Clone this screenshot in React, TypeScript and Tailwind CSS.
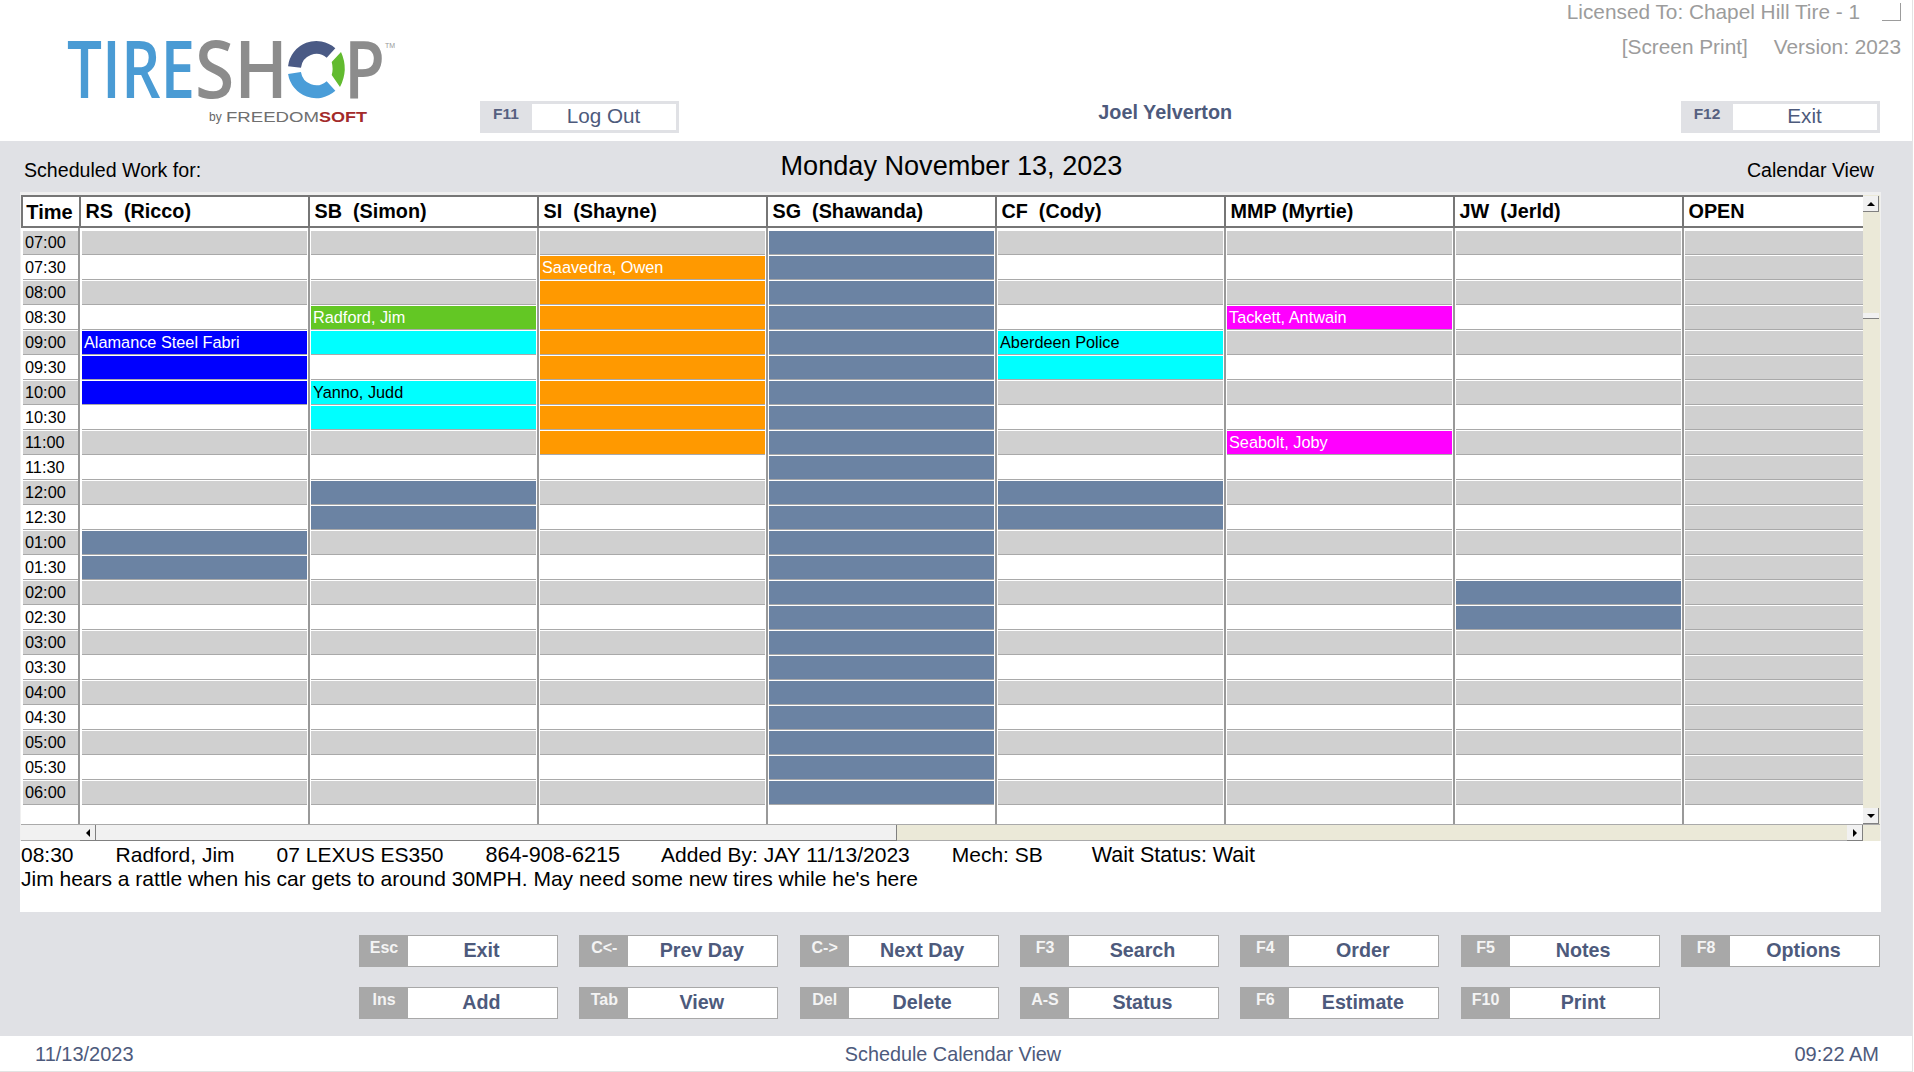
const times = [
  '07:00', '07:30', '08:00', '08:30', '09:00', '09:30', '10:00', '10:30', '11:00', '11:30', '12:00', '12:30',
  '01:00', '01:30', '02:00', '02:30', '03:00', '03:30', '04:00', '04:30', '05:00', '05:30', '06:00',
]

type Slot = { fill: string; label?: string }

const slate = { fill: 'bg-[#6b83a3]' }
const blue = 'bg-[#0000ff] text-white'
const cyan = 'bg-[#00ffff] text-black'
const orange = 'bg-[#ff9900] text-white'
const green = 'bg-[#63c724] text-white'
const pink = 'bg-[#ff00ff] text-white'

const sgSlots: Record<number, Slot> = {}
times.forEach((_, i) => {
  sgSlots[i] = slate
})

const columns: { name: string; slots: Record<number, Slot>; open?: boolean }[] = [
  {
    name: 'RS  (Ricco)',
    slots: {
      4: { fill: blue, label: 'Alamance Steel Fabri' },
      5: { fill: blue },
      6: { fill: blue },
      12: slate,
      13: slate,
    },
  },
  {
    name: 'SB  (Simon)',
    slots: {
      3: { fill: green, label: 'Radford, Jim' },
      4: { fill: cyan },
      6: { fill: cyan, label: 'Yanno, Judd' },
      7: { fill: cyan },
      10: slate,
      11: slate,
    },
  },
  {
    name: 'SI  (Shayne)',
    slots: {
      1: { fill: orange, label: 'Saavedra, Owen' },
      2: { fill: orange },
      3: { fill: orange },
      4: { fill: orange },
      5: { fill: orange },
      6: { fill: orange },
      7: { fill: orange },
      8: { fill: orange },
    },
  },
  { name: 'SG  (Shawanda)', slots: sgSlots },
  {
    name: 'CF  (Cody)',
    slots: {
      4: { fill: cyan, label: 'Aberdeen Police' },
      5: { fill: cyan },
      10: slate,
      11: slate,
    },
  },
  {
    name: 'MMP (Myrtie)',
    slots: {
      3: { fill: pink, label: 'Tackett, Antwain' },
      8: { fill: pink, label: 'Seabolt, Joby' },
    },
  },
  { name: 'JW  (Jerld)', slots: { 14: slate, 15: slate } },
  { name: 'OPEN', slots: {}, open: true },
]

const buttonRows = [
  [
    ['Esc', 'Exit'],
    ['C<-', 'Prev Day'],
    ['C->', 'Next Day'],
    ['F3', 'Search'],
    ['F4', 'Order'],
    ['F5', 'Notes'],
    ['F8', 'Options'],
  ],
  [
    ['Ins', 'Add'],
    ['Tab', 'View'],
    ['Del', 'Delete'],
    ['A-S', 'Status'],
    ['F6', 'Estimate'],
    ['F10', 'Print'],
  ],
]

function Logo() {
  return (
    <svg width="340" height="120" viewBox="0 -20 340 120" className="shrink-0">
      <g className="font-['Open_Sans',sans-serif]" fontSize="79" fontWeight="600">
        <text x="7" y="68" fill="#4a9bd4" textLength="128" lengthAdjust="spacingAndGlyphs">
          TIRE
        </text>
        <text x="135" y="68" fill="#8c8c8c" textLength="93" lengthAdjust="spacingAndGlyphs">
          SH
        </text>
        <text x="284" y="68" fill="#8c8c8c" textLength="41" lengthAdjust="spacingAndGlyphs">
          P
        </text>
      </g>
      <path d="M234.5 37 A22 22 0 0 1 271 23" fill="none" stroke="#4a5a85" strokeWidth="13" />
      <path d="M234.5 43 A22 22 0 0 0 271 56" fill="none" stroke="#4a9dd8" strokeWidth="13" />
      <path d="M281 22 Q289 39.5 280 57 L271.7 45 Q273.5 39 271.7 32 Z" fill="#62bb2f" />
      <text x="325" y="18" fontSize="7" fill="#999999" className="font-['Liberation_Sans',sans-serif]">
        TM
      </text>
      <g className="font-['Liberation_Sans',sans-serif]">
        <text x="149" y="91" fontSize="12" fill="#666666">
          by
        </text>
        <text x="166" y="92" fontSize="15.5" fill="#6f6f6f" textLength="93" lengthAdjust="spacingAndGlyphs">
          FREEDOM
        </text>
        <text x="259" y="92" fontSize="15.5" fontWeight="700" fill="#a32a2a" textLength="48" lengthAdjust="spacingAndGlyphs">
          SOFT
        </text>
      </g>
    </svg>
  )
}

function TopButton({ keyName, label }: { keyName: string; label: string }) {
  return (
    <div className="flex h-[32px] w-[199px] shrink-0 items-stretch bg-[#e0e1e5] py-[3px] pr-[3px]">
      <span className="flex w-[52px] items-start justify-center pt-[1px] text-[15.5px] leading-[18px] font-bold text-[#566080]">
        {keyName}
      </span>
      <span className="flex flex-1 items-center justify-center bg-white pr-[1px] pb-[2px] text-[20.7px] text-[#4d5a7c]">
        {label}
      </span>
    </div>
  )
}

function ActionButton({ keyName, label }: { keyName: string; label: string }) {
  return (
    <div className="flex h-[32px] w-[199px] shrink-0 border border-[#a8a8a8] bg-white">
      <span className="flex w-[48px] items-start justify-center bg-[#a8a8a8] pt-[2px] text-[16px] leading-[20px] font-bold text-[#f4f4f4]">
        {keyName}
      </span>
      <span className="flex flex-1 items-center justify-center pr-[2px] pb-[1px] text-[19.7px] font-bold text-[#4d5a7c]">
        {label}
      </span>
    </div>
  )
}

function Arrow({ dir }: { dir: 'up' | 'down' | 'left' | 'right' }) {
  const points = {
    up: '1,7 9,7 5,3',
    down: '1,3 9,3 5,7',
    left: '7,1 7,9 3,5',
    right: '3,1 3,9 7,5',
  }[dir]
  return (
    <svg width="10" height="10" viewBox="0 0 10 10">
      <polygon points={points} fill="#000000" />
    </svg>
  )
}

function ScrollButton({ dir }: { dir: 'up' | 'down' | 'left' | 'right' }) {
  return (
    <div className="flex h-[16px] w-[16px] shrink-0 items-center justify-center border-r border-b border-[#808080] bg-[#f1f1f1]">
      <Arrow dir={dir} />
    </div>
  )
}

export default function App() {
  return (
    <div className="h-[1072px] w-[1914px] overflow-hidden bg-white font-['Liberation_Sans',Arial,sans-serif]">
      <div className="flex h-[1072px] w-[1913px] flex-col border-r border-[#e3e3e3]">
        {/* header */}
        <div className="flex h-[141px] shrink-0">
          <div className="mt-[10px] ml-[60px]">
            <Logo />
          </div>
          <div className="mt-[101px] ml-[80px]">
            <TopButton keyName="F11" label="Log Out" />
          </div>
          <div className="mt-[99px] w-[785px] pl-[188px] text-center text-[19.8px] leading-[26px] font-bold text-[#4d5a7c]">
            Joel Yelverton
          </div>
          <div className="flex w-[449px] flex-col items-end text-[20.8px] text-[#9c9c9c]">
            <div className="flex h-[24px] w-full items-start justify-end pr-[11px]">
              <span className="leading-[24px] whitespace-nowrap">Licensed To: Chapel Hill Tire - 1</span>
              <span className="mt-[3px] ml-[22px] h-[18px] w-[19px] border-r border-b border-[#9c9c9c]" />
            </div>
            <div className="mt-[11px] flex h-[24px] gap-[26px] pr-[11px] leading-[24px] whitespace-nowrap">
              <span>[Screen Print]</span>
              <span>Version: 2023</span>
            </div>
            <div className="mt-[42px] mr-[32px]">
              <TopButton keyName="F12" label="Exit" />
            </div>
          </div>
        </div>

        {/* main */}
        <div className="flex flex-1 flex-col bg-[#e0e1e5]">
          <div className="grid h-[51px] shrink-0 grid-cols-[1fr_auto_1fr] pr-[33px] pl-[24px] text-black">
            <div className="pt-[17px] text-[19.6px] leading-[24px]">Scheduled Work for:</div>
            <div className="pt-[9px] text-[27.1px] leading-[32px]">Monday November 13, 2023</div>
            <div className="pt-[17px] pr-[5px] text-right text-[19.6px] leading-[24px]">Calendar View</div>
          </div>

          <div className="ml-[20px] flex h-[649px] w-[1861px] shrink-0 flex-col border-x border-t-[3px] border-[#f0f0f0] bg-white">
            <div className="flex h-[629px] shrink-0">
              <div className="w-[1842px] shrink-0">
                <div className="flex h-[33px]">
                  <div className="flex w-[60px] items-center justify-center border-2 border-[#767676] pr-[3px] text-[20px] font-bold text-black">
                    Time
                  </div>
                  {columns.map((col) => (
                    <div
                      key={col.name}
                      className={
                        col.open
                          ? 'flex w-[179px] items-center border-y-2 border-[#767676] pt-[1px] pl-[4.5px] text-[19.8px] font-bold whitespace-pre text-black'
                          : 'flex w-[229px] items-center border-y-2 border-r-2 border-[#767676] pt-[1px] pl-[4.5px] text-[19.8px] font-bold whitespace-pre text-black'
                      }
                    >
                      {col.name}
                    </div>
                  ))}
                </div>
                <div className="flex h-[596px]">
                  <div className="w-[60px] pr-[1px]">
                    <div className="h-full border-r-2 border-[#999999] pt-[2px] pl-[2px]">
                      {times.map((t, i) => (
                        <div key={t} className="h-[25px] border-t border-white">
                          <div
                            className={
                              i % 2 === 0
                                ? 'flex h-[24px] items-center border-b border-[#a9a9a9] bg-[#d0d0d0] pl-[2px] text-[16.3px] text-black'
                                : 'flex h-[24px] items-center border-b border-[#a9a9a9] bg-white pl-[2px] text-[16.3px] text-black'
                            }
                          >
                            {t}
                          </div>
                        </div>
                      ))}
                    </div>
                  </div>
                  {columns.map((col) => (
                    <div
                      key={col.name}
                      className={
                        col.open
                          ? 'w-[179px] pt-[2px] pl-[1px]'
                          : 'w-[229px] border-r-2 border-[#999999] pt-[2px] pr-[1px] pl-[1px]'
                      }
                    >
                      {times.map((t, i) => {
                        const slot = col.slots[i]
                        const base = slot ? slot.fill : col.open || i % 2 === 0 ? 'bg-[#d0d0d0]' : 'bg-white'
                        return (
                          <div key={t} className="h-[25px] border-t border-white">
                            <div className={`h-[24px] border-b border-[#a9a9a9] ${base}`}>
                              {slot?.label && (
                                <span className="block pl-[2px] text-[16.3px] leading-[23px] whitespace-nowrap">
                                  {slot.label}
                                </span>
                              )}
                            </div>
                          </div>
                        )
                      })}
                    </div>
                  ))}
                </div>
              </div>
              <div className="flex w-[17px] shrink-0 flex-col items-start bg-[#ebe9d8]">
                <div className="mt-[1px]">
                  <ScrollButton dir="up" />
                </div>
                <div className="mt-[101px] h-[6px] w-[16px] border-b border-[#808080] bg-[#f1f1f1]" />
                <div className="mt-auto">
                  <ScrollButton dir="down" />
                </div>
              </div>
            </div>
            <div className="flex h-[17px] shrink-0 border-t border-[#aaaaaa] bg-[#ebe9d8]">
              <div className="w-[59px] border-b border-[#aaaaaa] bg-[#f1f1f1]" />
              <ScrollButton dir="left" />
              <div className="w-[801px] border-r border-b border-[#808080] bg-[#f1f1f1]" />
              <div className="w-[950px] border-b border-[#aaaaaa]" />
              <ScrollButton dir="right" />
            </div>
          </div>

          <div className="ml-[20px] h-[71px] w-[1861px] shrink-0 bg-white pt-[2px] pl-[1px] text-[21px] leading-[24px] text-black">
            <div className="flex gap-[42px] whitespace-nowrap">
              <span>08:30</span>
              <span>Radford, Jim</span>
              <span>07 LEXUS ES350</span>
              <span className="text-[21.6px]">864-908-6215</span>
              <span className="-ml-[1px]">Added By: JAY 11/13/2023</span>
              <span>Mech: SB</span>
              <span className="ml-[7px] text-[21.5px]">Wait Status: Wait</span>
            </div>
            <div className="whitespace-nowrap">
              Jim hears a rattle when his car gets to around 30MPH. May need some new tires while he's here
            </div>
          </div>

          <div className="mt-[23px] flex flex-col gap-[20px] pl-[359px]">
            {buttonRows.map((row, i) => (
              <div key={i} className="flex gap-[21.33px]">
                {row.map(([k, label]) => (
                  <ActionButton key={k} keyName={k} label={label} />
                ))}
              </div>
            ))}
          </div>
        </div>

        {/* footer */}
        <div className="grid h-[36px] shrink-0 grid-cols-[1fr_auto_1fr] items-center border-b border-[#e3e3e3] pt-[1px] pr-[33px] pl-[35px] text-[20px] text-[#4d5a7c]">
          <span>11/13/2023</span>
          <span className="mt-[1px] mr-[8px] text-[19.8px]">Schedule Calendar View</span>
          <span className="text-right">09:22 AM</span>
        </div>
      </div>
    </div>
  )
}
